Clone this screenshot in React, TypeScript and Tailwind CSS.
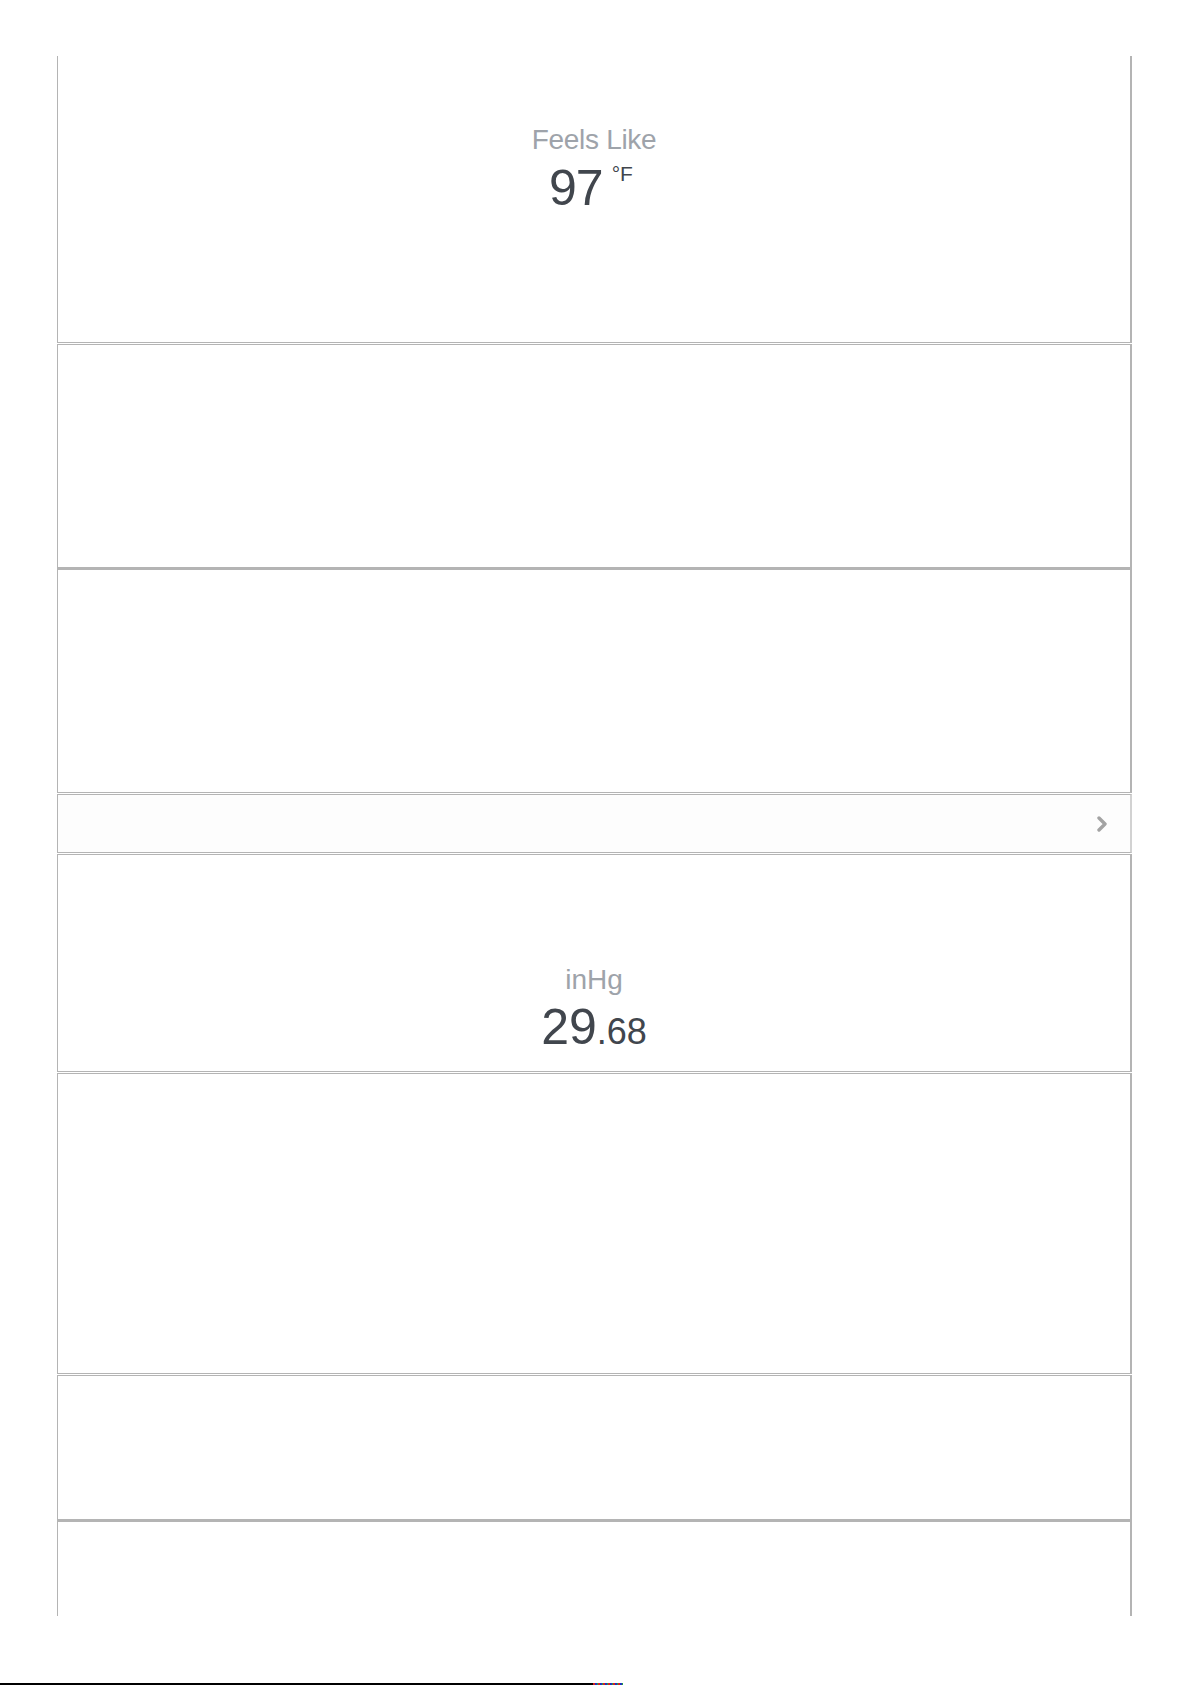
import React from "react";

const font = { fontFamily: '"Liberation Sans", Arial, Helvetica, sans-serif' };

export default function App() {
  return (
    <div className="w-[1191px] h-[1685px] bg-white flex flex-col" style={font}>
      <div className="h-[56px] shrink-0" />
      <div className="ml-[57px] w-[1075px] flex flex-col">
        {/* Card 1 */}
        <div className="h-[287px] border-l border-r-2 border-b border-[#b4b4b4] flex flex-col items-center pt-[70px]">
          <div className="text-[28px] leading-[28px] text-[#9ea3aa] tracking-[-0.3px]">Feels Like</div>
          <div className="flex items-start mt-[9px] text-[#41464d] mr-[6px]">
            <span className="text-[50px] leading-[50px] tracking-[-1px]">97</span>
            <span className="text-[21px] leading-[21px] ml-[9px] mt-[0px]">°F</span>
          </div>
        </div>
        {/* Card 2 */}
        <div className="mt-px h-[224px] border-l border-r-2 border-t border-b border-[#b4b4b4]" />
        {/* Card 3 */}
        <div className="h-[225px] border-l border-r-2 border-t-2 border-b border-[#b4b4b4]" />
        {/* Card 4 */}
        <div className="mt-px h-[59px] border-l border-t border-b border-r-2 border-[#b4b4b4] border-r-[#d2d2d2] bg-[#fdfdfd] flex items-center justify-end pr-[22px]">
          <svg width="12" height="16" viewBox="0 0 12 16" fill="none">
            <polyline points="3,2 9,8 3,14" stroke="#a3a3a3" strokeWidth="3.4" strokeLinecap="round" strokeLinejoin="round" />
          </svg>
        </div>
        {/* Card 5 */}
        <div className="mt-px h-[218px] border-l border-r-2 border-t border-b border-[#b4b4b4] flex flex-col items-center pt-[111px]">
          <div className="text-[28px] leading-[28px] text-[#9ea3aa]">inHg</div>
          <div className="flex items-baseline mt-[8px] text-[#41464d]">
            <span className="text-[50px] leading-[50px]">29</span>
            <span className="text-[36px] leading-[36px]">.68</span>
          </div>
        </div>
        {/* Card 6 */}
        <div className="mt-px h-[301px] border-l border-r-2 border-t border-b border-[#b4b4b4]" />
        {/* Card 7 */}
        <div className="mt-px h-[145px] border-l border-r-2 border-t border-b border-[#b4b4b4]" />
        {/* Card 8 */}
        <div className="h-[96px] border-l border-r-2 border-t-2 border-[#b4b4b4]" />
      </div>
      <div className="h-[67px] shrink-0" />
      <div className="flex h-[2px]">
        <div className="w-[593px] bg-black" />
        <div className="w-[30px] bg-[repeating-linear-gradient(90deg,#d42020_0px,#d42020_2px,#2030c0_2px,#2030c0_4px,#20a040_4px,#20a040_5px)]" />
      </div>
    </div>
  );
}
